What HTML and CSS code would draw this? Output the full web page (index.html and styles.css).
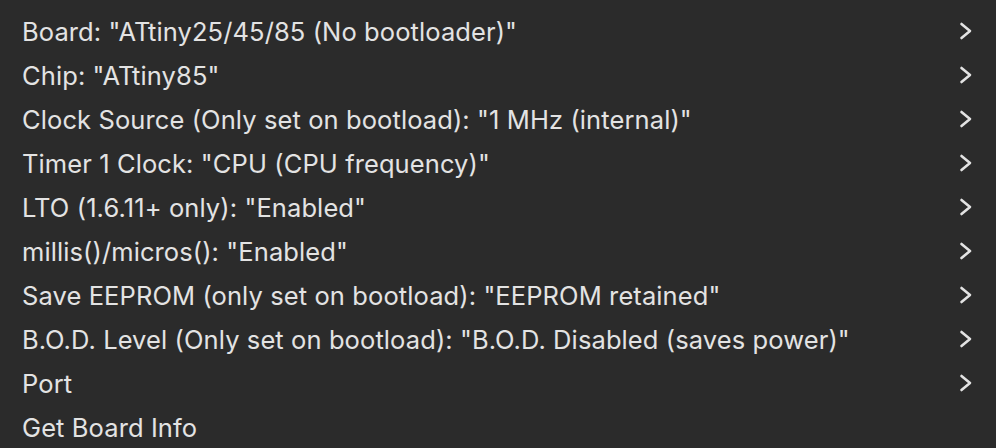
FILE: index.html
```html
<!DOCTYPE html>
<html>
<head>
<meta charset="utf-8">
<link rel="stylesheet" href="styles.css">
</head>
<body>
<div class="menu">
  <div class="item"><span class="label">Board: "ATtiny25/45/85 (No bootloader)"</span><svg class="chev" viewBox="0 0 14 18"><path d="M2.5 2 L11 9 L2.5 16"/></svg></div>
  <div class="item"><span class="label">Chip: "ATtiny85"</span><svg class="chev" viewBox="0 0 14 18"><path d="M2.5 2 L11 9 L2.5 16"/></svg></div>
  <div class="item"><span class="label">Clock Source (Only set on bootload): "1 MHz (internal)"</span><svg class="chev" viewBox="0 0 14 18"><path d="M2.5 2 L11 9 L2.5 16"/></svg></div>
  <div class="item"><span class="label">Timer 1 Clock: "CPU (CPU frequency)"</span><svg class="chev" viewBox="0 0 14 18"><path d="M2.5 2 L11 9 L2.5 16"/></svg></div>
  <div class="item"><span class="label">LTO (1.6.11+ only): "Enabled"</span><svg class="chev" viewBox="0 0 14 18"><path d="M2.5 2 L11 9 L2.5 16"/></svg></div>
  <div class="item"><span class="label">millis()/micros(): "Enabled"</span><svg class="chev" viewBox="0 0 14 18"><path d="M2.5 2 L11 9 L2.5 16"/></svg></div>
  <div class="item"><span class="label">Save EEPROM (only set on bootload): "EEPROM retained"</span><svg class="chev" viewBox="0 0 14 18"><path d="M2.5 2 L11 9 L2.5 16"/></svg></div>
  <div class="item"><span class="label">B.O.D. Level (Only set on bootload): "B.O.D. Disabled (saves power)"</span><svg class="chev" viewBox="0 0 14 18"><path d="M2.5 2 L11 9 L2.5 16"/></svg></div>
  <div class="item"><span class="label">Port</span><svg class="chev" viewBox="0 0 14 18"><path d="M2.5 2 L11 9 L2.5 16"/></svg></div>
  <div class="item"><span class="label">Get Board Info</span></div>
</div>
</body>
</html>
```
FILE: styles.css
```css
html, body {
  margin: 0;
  padding: 0;
  background: #2b2b2b;
}
body {
  width: 996px;
  height: 448px;
  overflow: hidden;
  font-family: Inter, "Noto Sans", sans-serif;
  color: #e3e3e3;
}
.menu {
  display: flex;
  flex-direction: column;
  padding-top: 9px;
}
.item {
  height: 44px;
  display: flex;
  align-items: center;
  justify-content: space-between;
  padding: 0 23px 0 22px;
}
.label {
  font-size: 25.5px;
  letter-spacing: 0.1px;
}
.chev {
  width: 14px;
  height: 18px;
  fill: none;
  stroke: #e3e3e3;
  stroke-width: 2.6;
  stroke-linecap: round;
  stroke-linejoin: round;
}
```
